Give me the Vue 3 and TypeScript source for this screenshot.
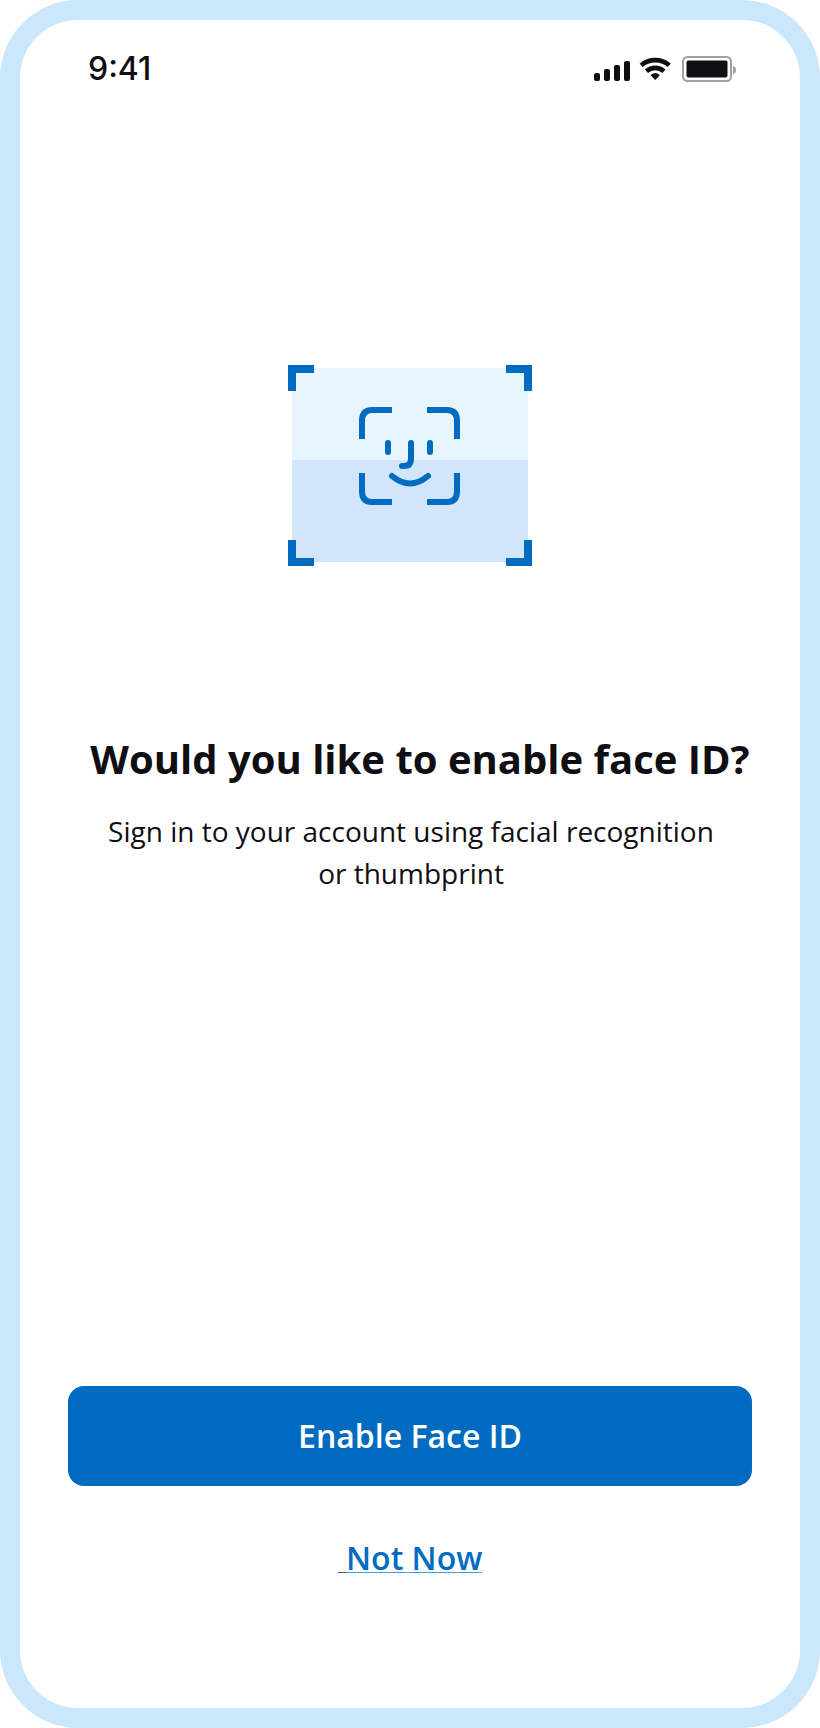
<script setup lang="ts">
const bars: number[] = [8, 12, 16, 20]
const title: string = 'Would you like to enable face ID?'
</script>

<template>
  <div class="phone">
    <header class="status">
      <span class="time">9:41</span>
      <div class="indicators">
        <svg class="signal" width="36" height="28" viewBox="0 0 36 28">
          <rect v-for="(h, i) in bars" :key="h" :x="i * 10" :y="26 - h" width="6" :height="h" rx="2" />
        </svg>
        <svg class="wifi" width="32" height="28" viewBox="0 0 32 28">
          <path class="arc" d="M2.2 10.4C9.7 3.4 22.7 3.4 30.2 10.4" />
          <path class="arc" d="M7.4 16.3C12.4 11.7 20 11.7 25 16.3" />
          <path d="M11.6 20.2Q16.2 15.6 20.8 20.2L16.8 24.5Q16.2 25 15.6 24.5Z" />
        </svg>
        <svg class="battery" width="54" height="28" viewBox="0 0 54 28">
          <rect class="shell" x="1" y="2" width="48" height="24" rx="4.5" />
          <rect x="4.5" y="5.5" width="41" height="17" rx="2" />
          <path class="nub" d="M51 11Q54 11.5 54 15Q54 18.5 51 19Z" />
        </svg>
      </div>
    </header>

    <main class="content">
      <svg class="art" width="244" height="201" viewBox="0 0 244 201">
        <rect class="light" x="4" y="3" width="236" height="92" />
        <rect class="shade" x="4" y="95" width="236" height="102" />
        <g class="corners">
          <path d="M4 26V4H26" />
          <path d="M218 4H240V26" />
          <path d="M4 175V197H26" />
          <path d="M218 197H240V175" />
        </g>
        <g class="face">
          <path d="M74 74V56Q74 45 84 45H104" />
          <path d="M139 45H159Q169 45 169 56V74" />
          <path d="M74 108V126Q74 137 84 137H104" />
          <path d="M139 137H159Q169 137 169 126V108" />
        </g>
        <g class="face round">
          <path d="M100 78V87" />
          <path d="M142 78V87" />
          <path d="M123 78V94Q123 101 116 101H114" />
          <path d="M104 111Q122 126 140 111" />
        </g>
      </svg>
      <h1>{{ title }}</h1>
      <p>Sign in to your account using facial recognition<br />or thumbprint</p>
    </main>

    <footer class="actions">
      <button class="primary" type="button">Enable Face ID</button>
      <a class="skip"><span class="lead">&nbsp;</span><span class="label">Not Now</span></a>
    </footer>
  </div>
</template>

<style>
html,
body {
  background: #fff;
}
</style>

<style scoped>
.phone {
  box-sizing: border-box;
  width: 820px;
  height: 1728px;
  border: 20px solid #cae7fc;
  border-radius: 78px;
  background: #fff;
  color: #0f0e13;
  font-family: 'Open Sans', 'Noto Sans', sans-serif;
  display: flex;
  flex-direction: column;
}
.status {
  display: flex;
  justify-content: space-between;
  align-items: center;
  margin-top: 29px;
  padding: 0 64px 0 68px;
  height: 40px;
}
.time {
  font: 500 32px/40px Inter, sans-serif;
}
.indicators {
  display: flex;
}
.signal,
.wifi,
.battery {
  display: block;
  fill: #0f0e13;
}
.signal {
  margin-right: 9px;
}
.wifi {
  margin-right: 11px;
}
.arc {
  fill: none;
  stroke: #0f0e13;
  stroke-width: 4.6;
}
.shell {
  fill: none;
  stroke: #a1a1a3;
  stroke-width: 2;
}
.nub {
  fill: #a1a1a3;
}
.content {
  display: flex;
  flex-direction: column;
  align-items: center;
  margin-top: 276px;
}
.art {
  display: block;
}
.light {
  fill: #e7f5ff;
}
.shade {
  fill: #d1e6fa;
}
.corners {
  fill: none;
  stroke: #006bc0;
  stroke-width: 8;
}
.face {
  fill: none;
  stroke: #006bc0;
  stroke-width: 6;
}
.round {
  stroke-linecap: round;
}
h1 {
  margin: 166px 0 0 20px;
  font-size: 40px;
  line-height: 54px;
  font-weight: 700;
  white-space: nowrap;
}
p {
  margin: 24px 0 0 2px;
  font-size: 28px;
  line-height: 42px;
  text-align: center;
  white-space: nowrap;
}
.actions {
  margin: auto 48px 128px;
  display: flex;
  flex-direction: column;
  align-items: center;
}
.primary {
  width: 684px;
  height: 100px;
  padding: 0;
  border: 0;
  border-radius: 16px;
  background: #006bc0;
  color: #fff;
  font: 600 32px/44px 'Open Sans', 'Noto Sans', sans-serif;
}
.skip {
  margin-top: 50px;
  font-size: 32px;
  line-height: 44px;
  font-weight: 600;
  color: #006bc0;
}
.lead,
.label {
  text-decoration: underline 1px;
  text-underline-offset: 2px;
  text-decoration-skip-ink: none;
}
.lead {
  text-decoration-color: #58595b;
}
.label {
  text-decoration-color: #4b9bd3;
}
</style>
